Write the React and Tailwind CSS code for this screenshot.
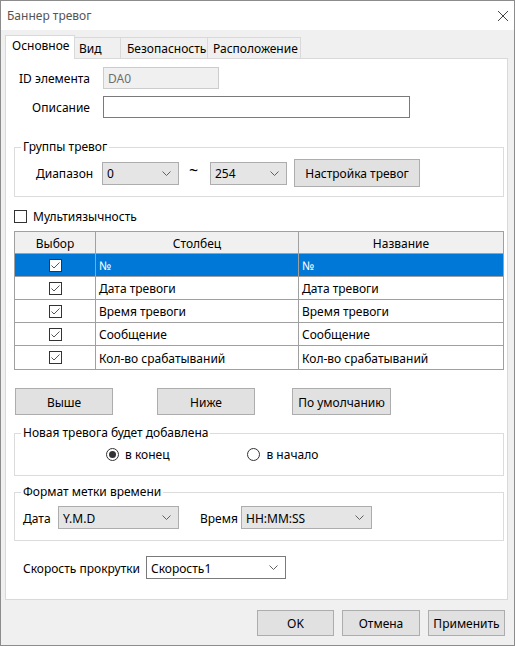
import React from 'react';

// Noto Sans sits a little high compared with the native dialog font
const nudge = 'pt-[2px]';

const Chevron = () => (
  <svg width="9" height="5" viewBox="0 0 9 5" className="shrink-0">
    <polyline points="0.5,0.5 4.5,4.5 8.5,0.5" fill="none" stroke="#606060" strokeWidth="1" />
  </svg>
);

const Combo = ({ value, white, className = '' }) => (
  <div
    className={`flex items-center h-[23px] border pl-[4px] pr-[7px] ${white ? 'bg-white border-[#7a7a7a]' : 'bg-[#e5e5e5] border-[#adadad]'} ${className}`}
  >
    <span className={`flex-1 ${nudge}`}>{value}</span>
    <Chevron />
  </div>
);

const Check = ({ checked }) => (
  <div className="w-[13px] h-[13px] border border-[#333] bg-white flex items-center justify-center">
    {checked && (
      <svg width="11" height="11" viewBox="0 0 11 11">
        <polyline points="1.5,5.5 4,8 9.5,2.5" fill="none" stroke="#555" strokeWidth="1" />
      </svg>
    )}
  </div>
);

const Radio = ({ checked }) => (
  <div className="w-[13px] h-[13px] rounded-full border border-[#333] bg-white flex items-center justify-center">
    {checked && <div className="w-[7px] h-[7px] rounded-full bg-[#333]" />}
  </div>
);

const Btn = ({ children, className = '' }) => (
  <div className={`flex items-center justify-center bg-[#e1e1e1] border border-[#adadad] text-black ${className}`}>
    <span className={nudge}>{children}</span>
  </div>
);

const Group = ({ title, className = '', children }) => (
  <fieldset className={`ml-[8px] w-[490px] border border-[#dcdcdc] ${className}`}>
    <legend className="ml-[6px] px-[2px] leading-[16px]">{title}</legend>
    {children}
  </fieldset>
);

const columns = [
  { name: '№', title: '№' },
  { name: 'Дата тревоги', title: 'Дата тревоги' },
  { name: 'Время тревоги', title: 'Время тревоги' },
  { name: 'Сообщение', title: 'Сообщение' },
  { name: 'Кол-во срабатываний', title: 'Кол-во срабатываний' },
];

export default function App() {
  return (
    <div className="w-[515px] h-[646px] border border-[#8c8c8c] bg-[#f0f0f0] flex flex-col font-['Noto_Sans',sans-serif] text-[12px] text-black overflow-hidden">
      {/* title bar */}
      <div className="h-[29px] bg-white flex items-center justify-between pl-[6px] pr-[5px]">
        <span className="text-[#555]">Баннер тревог</span>
        <svg width="12" height="12" viewBox="0 0 12 12">
          <path d="M1 1 L11 11 M11 1 L1 11" stroke="#444" strokeWidth="1" />
        </svg>
      </div>

      {/* tabs */}
      <div className="h-[28px] flex items-end pl-[4px]">
        <div className="relative z-10 -mb-px h-[24px] w-[70px] bg-white border border-b-0 border-[#d9d9d9] flex items-center pl-[6px] pb-[3px]">
          Основное
        </div>
        <div className="h-[21px] w-[46px] border-t border-r border-[#d9d9d9] flex items-center pl-[4px] pt-[1px]">Вид</div>
        <div className="h-[21px] w-[87px] border-t border-r border-[#d9d9d9] flex items-center pl-[6px] pt-[1px]">Безопасность</div>
        <div className="h-[21px] w-[93px] border-t border-r border-[#d9d9d9] flex items-center pl-[5px] pt-[1px]">Расположение</div>
      </div>

      {/* page */}
      <div className="ml-[4px] w-[503px] h-[542px] bg-white border border-[#d9d9d9] flex flex-col">
        <div className="mt-[8px] flex items-center h-[22px]">
          <span className={`w-[84px] text-right ${nudge}`}>ID элемента</span>
          <div className="ml-[13px] w-[116px] h-[22px] bg-[#f0f0f0] border border-[#cccccc] flex items-center pl-[4px] text-[#6d6d6d]">
            <span className={nudge}>DA0</span>
          </div>
        </div>
        <div className="mt-[7px] flex items-center h-[22px]">
          <span className={`w-[84px] text-right ${nudge}`}>Описание</span>
          <div className="ml-[13px] w-[307px] h-[22px] bg-white border border-[#7a7a7a]" />
        </div>

        <Group title="Группы тревог" className="mt-[21px] pb-[9px]">
          <div className="mt-[4px] flex items-center h-[28px] pl-[21px]">
            <span className={`w-[54px] ${nudge}`}>Диапазон</span>
            <Combo value="0" className="ml-[12px] w-[77px]" />
            <span className="ml-[10px] w-[21px] text-[16px] leading-none pb-[6px]">~</span>
            <Combo value="254" className="w-[77px]" />
            <Btn className="ml-[7px] w-[126px] h-[28px]">Настройка тревог</Btn>
          </div>
        </Group>

        <div className="mt-[11px] ml-[8px] flex items-center h-[16px] gap-[6px]">
          <Check />
          <span className={nudge}>Мультиязычность</span>
        </div>

        <div className="mt-[7px] ml-[8px] w-[490px] border border-[#a0a0a0]">
          <div className="flex h-[22px] bg-[#f0f0f0] border-b border-[#a0a0a0]">
            <div className={`w-[81px] border-r border-[#a0a0a0] flex items-center justify-center ${nudge}`}>Выбор</div>
            <div className={`w-[203px] border-r border-[#a0a0a0] flex items-center justify-center ${nudge}`}>Столбец</div>
            <div className={`flex-1 flex items-center justify-center ${nudge}`}>Название</div>
          </div>
          {columns.map((c, i) => {
            const sel = i === 0;
            return (
              <div
                key={c.name}
                className={`flex h-[23px] ${i < columns.length - 1 ? 'border-b' : ''} border-[#a0a0a0] ${sel ? 'bg-[#0078d7] text-white' : ''}`}
              >
                <div className="w-[81px] border-r border-[#a0a0a0] flex items-center justify-center">
                  <Check checked />
                </div>
                <div className={`w-[203px] border-r border-[#a0a0a0] flex items-center pl-[3px] ${nudge}`}>{c.name}</div>
                <div className={`flex-1 flex items-center pl-[3px] ${nudge}`}>{c.title}</div>
              </div>
            );
          })}
        </div>

        <div className="mt-[18px] ml-[9px] flex h-[27px]">
          <Btn className="w-[98px]">Выше</Btn>
          <Btn className="ml-[44px] w-[98px]">Ниже</Btn>
          <Btn className="ml-[37px] w-[99px]">По умолчанию</Btn>
        </div>

        <Group title="Новая тревога будет добавлена" className="mt-[10px] pb-[13px]">
          <div className="mt-[5px] flex items-center h-[16px]">
            <div className="ml-[91px] flex items-center gap-[6px]">
              <Radio checked />
              <span className={nudge}>в конец</span>
            </div>
            <div className="ml-[78px] flex items-center gap-[6px]">
              <Radio />
              <span className={nudge}>в начало</span>
            </div>
          </div>
        </Group>

        <Group title="Формат метки времени" className="mt-[8px] pb-[11px]">
          <div className="mt-[6px] flex items-center h-[23px] pl-[8px]">
            <span className={`w-[35px] ${nudge}`}>Дата</span>
            <Combo value="Y.M.D" className="w-[121px]" />
            <span className={`ml-[21px] w-[41px] ${nudge}`}>Время</span>
            <Combo value="HH:MM:SS" className="w-[131px]" />
          </div>
        </Group>

        <div className="mt-[15px] ml-[17px] flex items-center h-[23px]">
          <span className={`w-[123px] ${nudge}`}>Скорость прокрутки</span>
          <Combo value="Скорость1" white className="w-[140px]" />
        </div>
      </div>

      {/* dialog buttons */}
      <div className="mt-[10px] flex justify-end gap-[8px] pr-[9px]">
        <Btn className="w-[77px] h-[26px]">OK</Btn>
        <Btn className="w-[78px] h-[26px]">Отмена</Btn>
        <Btn className="w-[77px] h-[26px]">Применить</Btn>
      </div>
    </div>
  );
}
